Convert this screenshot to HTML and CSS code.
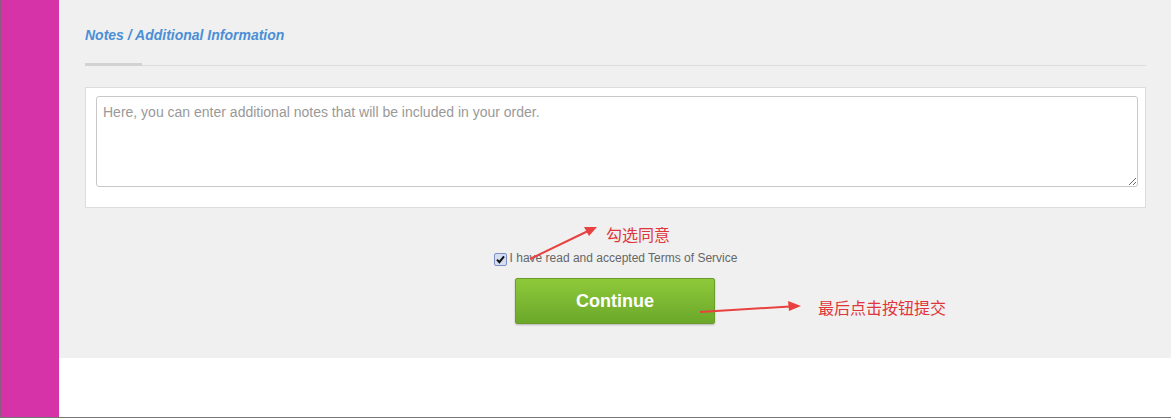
FILE: index.html
```html
<!DOCTYPE html>
<html lang="en">
<head>
    <meta charset="UTF-8">
    <title>Notes / Additional Information</title>
    <link rel="stylesheet" href="styles.css">
</head>
<body>
    <div class="page">
        <aside class="sidebar"></aside>

        <main class="main">
            <section class="panel">
                <div class="section-title">
                    <h3>Notes / Additional Information</h3>
                </div>

                <div class="notes-box">
                    <textarea placeholder="Here, you can enter additional notes that will be included in your order."></textarea>
                </div>

                <label class="tos">
                    <span class="check">
                        <svg width="9" height="9" viewBox="0 0 9 9"><path d="M1 4.6 L3.4 7.2 L8 1.4" fill="none" stroke="#111" stroke-width="2"/></svg>
                    </span>
                    I have read and accepted Terms of Service
                </label>

                <div class="actions">
                    <button class="btn-continue">Continue</button>
                </div>
            </section>
        </main>

        <!-- red annotations drawn over the screenshot -->
        <div class="note note-check">勾选同意</div>
        <div class="note note-submit">最后点击按钮提交</div>
        <svg class="arrows" width="1171" height="418" viewBox="0 0 1171 418">
            <line x1="530" y1="259" x2="588" y2="231" stroke="#e8413f" stroke-width="2"/>
            <polygon points="597,227 584,227 589,236" fill="#e8413f"/>
            <line x1="700" y1="312" x2="790" y2="306.5" stroke="#e8413f" stroke-width="2"/>
            <polygon points="801,306 788,301 789,311" fill="#e8413f"/>
        </svg>
    </div>
</body>
</html>
```

FILE: styles.css
```css
/* checkout notes step */
body {
    margin: 0;
    font-family: Arial, "Liberation Sans", sans-serif;
    background-color: #ffffff;
}

.page {
    position: relative;
    display: flex;
    height: 417px;
    border-bottom: 1px solid #767676;
}

.sidebar {
    width: 58px;
    flex-shrink: 0;
    background-color: #d633a8;
    border-left: 1px solid #8a5a80;
}

.main {
    flex: 1;
    background-color: #ffffff;
}

.panel {
    background-color: #f0f0f0;
    height: 358px;
    padding: 27px 25px 0 26px;
    box-sizing: border-box;
}

.section-title {
    position: relative;
    border-bottom: 1px solid #dcdcdc;
    padding-bottom: 21px;
    margin-bottom: 21px;
}

.section-title::after {
    content: "";
    position: absolute;
    left: 0;
    bottom: -1px;
    width: 57px;
    height: 3px;
    background-color: #d2d2d2;
}

.section-title h3 {
    margin: 0;
    font-size: 14px;
    line-height: 17px;
    font-style: italic;
    font-weight: bold;
    color: #4a8fd6;
}

.notes-box {
    background-color: #ffffff;
    border: 1px solid #dcdcdc;
    padding: 8px 7px 20px 10px;
}

.notes-box textarea {
    display: block;
    width: 100%;
    height: 91px;
    box-sizing: border-box;
    border: 1px solid #c8c8c8;
    border-radius: 3px;
    padding: 7px 6px;
    font-family: Arial, "Liberation Sans", sans-serif;
    font-size: 14px;
    color: #555;
    resize: vertical;
    outline: none;
}

.notes-box textarea::placeholder {
    color: #999;
}

.tos {
    display: flex;
    justify-content: center;
    align-items: center;
    gap: 3px;
    margin-top: 41px;
    font-size: 12px;
    color: #666;
    line-height: 14px;
}

.check {
    display: flex;
    align-items: center;
    justify-content: center;
    width: 11px;
    height: 11px;
    border: 1px solid #7d8fc2;
    border-radius: 2px;
    background-color: #d5ddf0;
    margin-top: 4px;
}

.actions {
    display: flex;
    justify-content: center;
    margin-top: 12px;
}

.btn-continue {
    width: 200px;
    height: 46px;
    margin-right: 1px;
    border: 1px solid #6b9b2b;
    border-radius: 2px;
    background: linear-gradient(#8ec93a, #6ba82a);
    box-shadow: 0 1px 2px rgba(0, 0, 0, 0.25);
    color: #ffffff;
    font-family: Arial, "Liberation Sans", sans-serif;
    font-size: 18px;
    font-weight: bold;
    cursor: pointer;
}

.note {
    position: absolute;
    color: #e0353a;
    font-family: "Noto Sans CJK SC", sans-serif;
    font-size: 16px;
    line-height: 18px;
}

.note-check {
    left: 606px;
    top: 225px;
}

.note-submit {
    left: 818px;
    top: 298px;
}

.arrows {
    position: absolute;
    left: 0;
    top: 0;
    pointer-events: none;
}
```
